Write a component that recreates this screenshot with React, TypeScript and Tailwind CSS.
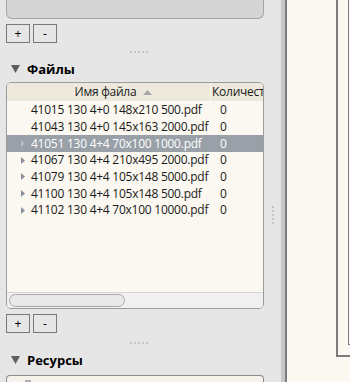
import type { FC } from "react";

const FILES = [
  { name: "41015 130 4+0 148x210 500.pdf", count: "0", expandable: false },
  { name: "41043 130 4+0 145x163 2000.pdf", count: "0", expandable: false },
  { name: "41051 130 4+4 70x100 1000.pdf", count: "0", expandable: true, selected: true },
  { name: "41067 130 4+4 210x495 2000.pdf", count: "0", expandable: true },
  { name: "41079 130 4+4 105x148 5000.pdf", count: "0", expandable: true },
  { name: "41100 130 4+4 105x148 500.pdf", count: "0", expandable: true },
  { name: "41102 130 4+4 70x100 10000.pdf", count: "0", expandable: true },
];

const PlusMinus: FC = () => (
  <div className="flex h-[19px] shrink-0 gap-[3px] text-[12px] text-black">
    <button className="flex w-[24px] items-center justify-center border border-[#7a7a7a] bg-[#e6e6e6] leading-none">
      +
    </button>
    <button className="flex w-[24px] items-center justify-center border border-[#7a7a7a] bg-[#e6e6e6] leading-none">
      -
    </button>
  </div>
);

const DotsH: FC = () => (
  <div className="flex shrink-0 justify-center gap-[2px] pl-[8px]">
    {[0, 1, 2, 3, 4].map((i) => (
      <span key={i} className="h-[2px] w-[2px] bg-[#c4c4c4]" />
    ))}
  </div>
);

const SectionTitle: FC<{ label: string }> = ({ label }) => (
  <div className="flex h-[14px] shrink-0 items-center gap-[7px] pl-[5px] text-[13px] font-bold text-black">
    <svg width="9" height="8" viewBox="0 0 9 8">
      <path d="M0 0 H9 L4.5 8 Z" fill="#5f5f5f" />
    </svg>
    <span className="leading-none">{label}</span>
  </div>
);

export default function App() {
  return (
    <div
      className="flex h-[382px] w-[350px] overflow-hidden bg-[#e6e6e6]"
      style={{ fontFamily: '"Open Sans", "Noto Sans", sans-serif' }}
    >
      <div className="flex w-[281px] shrink-0">
        <div className="ml-[6px] flex w-[258px] shrink-0 flex-col">
          <div className="h-[19px] shrink-0 rounded-b-[6px] border-x border-b border-[#a6a6a6] bg-[#d5d5d5]" />
          <div className="mt-[5px] shrink-0">
            <PlusMinus />
          </div>
          <div className="mt-[8px] shrink-0">
            <DotsH />
          </div>
          <div className="mt-[9px] shrink-0">
            <SectionTitle label="Файлы" />
          </div>

          <div className="mt-[6px] flex h-[227px] shrink-0 flex-col overflow-hidden rounded-[5px] border border-[#9c9c9c] bg-[#faf8f0] text-[12px] tracking-[-0.25px] text-[#1a1a1a]">
            <div className="flex h-[18px] shrink-0 bg-[#ede9dc]">
              <div className="flex w-[204px] shrink-0 items-center justify-center gap-[7px] border-r border-[#f7f5ee] pl-[10px]">
                <span>Имя файла</span>
                <svg width="9" height="5" viewBox="0 0 9 5">
                  <path d="M0 5 L4.5 0 L9 5 Z" fill="#a8a8a8" />
                </svg>
              </div>
              <div className="min-w-0 flex-1 overflow-hidden whitespace-nowrap pl-[1px] leading-[18px]">
                Количест
              </div>
            </div>
            <div className="flex flex-1 flex-col pt-[1px]">
              {FILES.map((f, idx) => (
                <div
                  key={idx}
                  className={
                    f.selected
                      ? "flex h-[16.67px] shrink-0 items-center bg-[#9aa0a8] text-white"
                      : "flex h-[16.67px] shrink-0 items-center"
                  }
                >
                  <div className="flex w-[204px] shrink-0 items-center whitespace-nowrap">
                    <span className="flex w-[24px] shrink-0 justify-end pr-[6px]">
                      {f.expandable && (
                        <svg width="4" height="7" viewBox="0 0 4 7">
                          <path d="M0 0 L4 3.5 L0 7 Z" fill={f.selected ? "#b4bac2" : "#8a9098"} />
                        </svg>
                      )}
                    </span>
                    <span>{f.name}</span>
                  </div>
                  <div className="pl-[9px]">{f.count}</div>
                </div>
              ))}
            </div>
            <div className="flex h-[16px] shrink-0 items-center border-t border-[#d4d4d4] bg-[#f0f0f0] pl-[2px]">
              <div className="h-[13px] w-[116px] rounded-full border border-[#a8a8a8] bg-[#e9e9e9]" />
            </div>
          </div>

          <div className="mt-[5px] shrink-0">
            <PlusMinus />
          </div>
          <div className="mt-[9px] shrink-0">
            <DotsH />
          </div>
          <div className="mt-[9px] shrink-0">
            <SectionTitle label="Ресурсы" />
          </div>
          <div className="mt-[8px] h-[20px] shrink-0 rounded-t-[4px] border-x border-t border-[#8c8c8c] bg-[#f4f2ea] pl-[18px] pt-[4px]">
            <div className="h-[6px] w-[6px] bg-[#b0b0b0]" />
          </div>
        </div>
        <div className="flex flex-1 items-center justify-center pt-[48px]">
          <div className="flex flex-col gap-[2px] pl-[1px]">
            {[0, 1, 2, 3, 4].map((i) => (
              <span key={i} className="h-[2px] w-[2px] bg-[#c4c4c4]" />
            ))}
          </div>
        </div>
      </div>

      <div className="w-[4px] shrink-0 bg-[#c8c8c8]" />
      <div className="w-[2px] shrink-0 bg-[#7c7c7c]" />
      <div className="w-[49px] shrink-0 bg-[#faf8f0]" />
      <div className="flex-1 bg-[#faf8f0]">
        <div className="h-[357px] border-b-2 border-l-2 border-[#7c7c7c] pl-[10px]">
          <div className="h-[345px] border-b border-l border-[#7c7c7c]" />
        </div>
      </div>
    </div>
  );
}
